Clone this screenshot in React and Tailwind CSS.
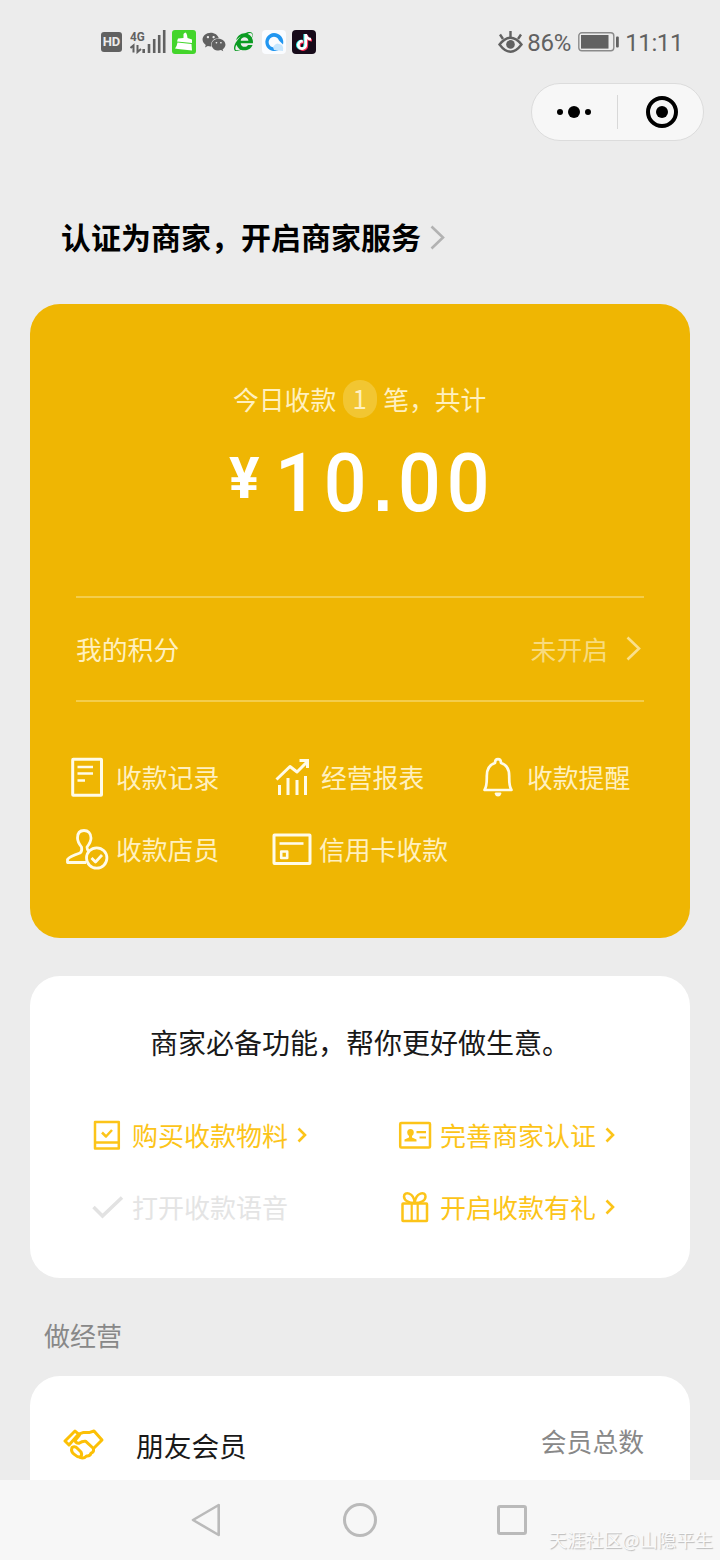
import { FaWeixin, FaTiktok, FaInternetExplorer } from 'react-icons/fa6'

const TOOLS = [
  { label: '收款记录', icon: RecordIcon },
  { label: '经营报表', icon: ReportIcon },
  { label: '收款提醒', icon: BellIcon },
  { label: '收款店员', icon: ClerkIcon },
  { label: '信用卡收款', icon: CardIcon },
]

const FEATURES = [
  { label: '购买收款物料', icon: BookIcon },
  { label: '完善商家认证', icon: IdIcon },
  { label: '打开收款语音', icon: CheckIcon, done: true },
  { label: '开启收款有礼', icon: GiftIcon },
]

/* ---- icons in the yellow card, all on a 45 x 44 box ---- */

function ToolSvg({ children }) {
  return (
    <svg width="45" height="44" viewBox="0 0 45 44" fill="none" stroke="#fffbe8" strokeWidth="3" strokeLinejoin="round" className="shrink-0">
      {children}
    </svg>
  )
}

function RecordIcon() {
  return (
    <ToolSvg>
      <rect x="7.7" y="4.3" width="28.8" height="36" rx="0.5" />
      <path d="M12.5 12H28M12.5 18.5H28M12.5 25.5H20" strokeWidth="2.6" />
    </ToolSvg>
  )
}

function ReportIcon() {
  return (
    <ToolSvg>
      <path d="M6.5 24.5L20 11.5L27 17L37 7" />
      <path d="M29.5 5.5H37.5V13" strokeLinejoin="miter" />
      <path d="M9.5 30V40M18 23V40M27 25V40M35.5 21V40" />
    </ToolSvg>
  )
}

function BellIcon() {
  return (
    <ToolSvg>
      <path d="M8.5 35H35.5C33 31.5 33.2 28 33.2 21C33.2 13.5 30 9.5 25 8C25 5.5 24 4.2 22 4.2C20 4.2 19 5.5 19 8C14 9.5 10.8 13.5 10.8 21C10.8 28 11 31.5 8.5 35Z" strokeWidth="2.7" />
      <path d="M19.5 38.5H24.5Q24 40.5 22 40.5T19.5 38.5Z" strokeWidth="1.8" fill="#fffbe8" />
    </ToolSvg>
  )
}

function ClerkIcon() {
  return (
    <ToolSvg>
      <path d="M21 35.5H2.5V32.5Q4.5 29.5 15 26Q17.5 24.5 16.5 20Q12.5 15 12.5 11C12.5 6 15 3.5 19 3.5S26 6 26 11Q26 15 22 20Q22 23 24 25" strokeWidth="2.8" />
      <circle cx="31.7" cy="31" r="10.2" strokeWidth="2.8" />
      <path d="M26.5 31L30.5 35L37 28" strokeWidth="2.8" />
    </ToolSvg>
  )
}

function CardIcon() {
  return (
    <ToolSvg>
      <rect x="4" y="8" width="36" height="28.5" rx="0.5" />
      <path d="M9.5 16.5H33.5" strokeWidth="2.6" />
      <rect x="11.2" y="24.5" width="6" height="6.5" strokeWidth="2.6" />
    </ToolSvg>
  )
}

/* ---- icons in the feature card, all on a 34 x 34 box ---- */

function FeatureSvg({ children, color = '#fcc419' }) {
  return (
    <svg width="34" height="34" viewBox="0 0 34 34" fill="none" stroke={color} strokeWidth="2.5" strokeLinejoin="round" className="shrink-0">
      {children}
    </svg>
  )
}

function BookIcon() {
  return (
    <FeatureSvg>
      <rect x="5" y="4" width="23.8" height="26.5" />
      <path d="M5 24.5H28.5" />
      <path d="M12 14.5L16 18.5L22 12" />
    </FeatureSvg>
  )
}

function IdIcon() {
  return (
    <FeatureSvg>
      <rect x="2.2" y="5" width="29.8" height="24.5" rx="1" />
      <path d="M6.5 23.5V21.5L11 19.5V18Q9.2 16.5 9.2 14.5Q9.2 11 12.5 11T15.8 14.5Q15.8 16.5 14 18V19.5L18.5 21.5V23.5Z" fill="#fcc419" stroke="none" />
      <path d="M18.5 14.2H28M21.5 19.5H28" strokeWidth="2.2" />
    </FeatureSvg>
  )
}

function CheckIcon() {
  return (
    <FeatureSvg color="#e2e2e2">
      <path d="M3.5 17L12.5 26L32 7.5" strokeWidth="3.5" strokeLinejoin="miter" />
    </FeatureSvg>
  )
}

function GiftIcon() {
  return (
    <FeatureSvg>
      <rect x="4.5" y="13.5" width="24.5" height="17.5" rx="0.5" />
      <path d="M13.7 14V31M19.7 14V31" strokeWidth="2.2" />
      <path d="M16.7 13C11 13 6 10.5 6 6.5C6 1 16 2 16.7 13ZM16.7 13C23 13 27.5 10.5 27.5 6.5C27.5 1 17.7 2 16.7 13Z" />
    </FeatureSvg>
  )
}

function HandshakeIcon() {
  return (
    <svg width="42" height="34" viewBox="0 0 42 34" fill="none" stroke="#fcc006" strokeWidth="3" strokeLinejoin="round" strokeLinecap="round">
      <path d="M2 13L12 3L15.5 6.2L6 17Z" />
      <path d="M15.5 6.2L20 4.6H26L31 3L39 12L30.5 20.5" />
      <path d="M16.5 7L12 12.5Q13 15.5 16 15.2Q19.5 12.8 22.5 13.2L30.5 20.5Q31 24.5 28 25.3Q27 28.5 23.5 28Q20.5 31.3 17 29.3" />
      <path d="M9 19.5Q12 17.5 14.5 20.5L18 24Q19.5 27 17.5 29.3Q14 29 11.5 26.5Q7.5 24 9 19.5Z" />
    </svg>
  )
}

function Chevron({ width, height, color, stroke }) {
  return (
    <svg width={width} height={height} viewBox={`0 0 ${width} ${height}`} fill="none" stroke={color} strokeWidth={stroke} className="shrink-0">
      <path d={`M1.5 1.5L${width - 2} ${height / 2}L1.5 ${height - 1.5}`} />
    </svg>
  )
}

function StatusBar() {
  return (
    <header className="flex h-[83px] items-center pr-[37px] pl-[101px] font-['Roboto',sans-serif] text-[#616161]">
      <div className="flex h-5 w-[21px] items-center justify-center rounded-[3px] bg-[#616161] text-[13px] font-bold text-[#ececec]">HD</div>
      <div className="relative ml-2 h-6 w-[36px]">
        <span className="absolute top-0 left-0 origin-left scale-x-90 text-[13px] leading-none font-bold">4G</span>
        <svg width="36" height="24" viewBox="0 0 36 24" fill="none" stroke="#616161" strokeWidth="2.6">
          <path d="M19 23V14M24.2 23V9M29.2 23V5M34.2 23V0M13.7 23V19" />
          <path d="M0.5 18L3.5 15.5V22.5M7.5 15V22L11 19" strokeWidth="2" />
        </svg>
      </div>
      <svg width="24" height="24" viewBox="0 0 24 24" className="ml-[6px]">
        <rect width="24" height="24" rx="3" fill="#43d52b" />
        <path d="M11.5 4Q14 0.5 15 5L15.5 8L20 9.5V13L5 11.5L6 8.5L11.5 8Z" fill="#fff" />
        <path d="M5.5 12.5L19.5 14L20 20.5L6 19L3 18.5Q5 16 5.5 12.5Z" fill="#fff" />
      </svg>
      <FaWeixin className="ml-[6px] h-[24px] w-[24px]" />
      <FaInternetExplorer className="ml-[8px] h-[19px] w-[19px] text-[#0b9b22]" />
      <svg width="24" height="24" viewBox="0 0 24 24" className="ml-[9px]">
        <rect width="24" height="24" rx="4" fill="#fafcff" />
        <path d="M12 3a9 9 0 1 0 6 16l-3-2.5a5.300 5.300 0 1 1 2-6l4 4A9.300 9.300 0 0 0 12 3Z" fill="#2196f0" />
        <path d="M11 17Q14 12 17 14Q22 14 21 21L12 20Z" fill="#c7e6fd" />
      </svg>
      <div className="relative ml-[6px] h-6 w-6 rounded bg-[#170b1a]">
        <FaTiktok className="absolute top-[4px] left-[3px] h-4 w-4 text-[#25f4ee]" />
        <FaTiktok className="absolute top-[5px] left-[5px] h-4 w-4 text-[#fe2c55]" />
        <FaTiktok className="absolute top-[4px] left-[4px] h-4 w-4 text-white" />
      </div>

      <div className="ml-auto flex items-center">
        <svg width="25" height="22" viewBox="0 0 25 22" fill="none" stroke="#616161" strokeWidth="2.4">
          <path d="M1.5 13.5Q12.5 0 23.5 13.5Q12.5 28 1.5 13.5Z" />
          <circle cx="12.5" cy="13.4" r="4.3" fill="#616161" stroke="none" />
          <path d="M12.5 0V6M2 3.5L5 8M23 3.5L20 8" />
        </svg>
        <span className="ml-[4px] pt-[2px] text-[24px] tracking-[-0.2px]">86%</span>
        <svg width="41" height="20" viewBox="0 0 41 20" className="ml-[7px]">
          <rect x="0.8" y="0.8" width="35" height="18" rx="3" fill="none" stroke="#8a8a8a" strokeWidth="1.4" />
          <rect x="3" y="3" width="27.5" height="13.6" fill="#616161" />
          <rect x="38" y="4.5" width="2.8" height="11" rx="1" fill="#616161" />
        </svg>
        <span className="ml-[6px] pt-[2px] text-[24px] tracking-[-0.4px]">11:11</span>
      </div>
    </header>
  )
}

function Capsule() {
  return (
    <div className="mr-4 ml-auto flex h-[58px] w-[173px] items-center rounded-full border border-[#dcdcdc] bg-[#f7f7f7]">
      <div className="flex h-[34px] w-[86px] items-center justify-center gap-[5px] border-r border-[#d8d8d8] pr-px">
        <i className="h-1.5 w-1.5 rounded-full bg-black" />
        <i className="h-3 w-3 rounded-full bg-black" />
        <i className="h-1.5 w-1.5 rounded-full bg-black" />
      </div>
      <div className="flex flex-1 justify-center pl-[3px]">
        <div className="flex h-8 w-8 items-center justify-center rounded-full border-4 border-black">
          <i className="h-3 w-3 rounded-full bg-black" />
        </div>
      </div>
    </div>
  )
}

function IncomeCard() {
  return (
    <section className="mx-[30px] h-[634px] rounded-[30px] bg-[#efb603] text-[#fff0bf]">
      <div className="flex h-[292px] flex-col pt-[76px]">
        <div className="flex h-[38px] items-center pl-[203px] text-[25.8px]">
          <span>今日收款</span>
          <span className="mx-[6.5px] flex h-[38px] w-[34px] items-center justify-center rounded-full bg-[#f2c632] pb-px">1</span>
          <span>笔，共计</span>
        </div>
        <div className="flex pt-[18px] pl-[199px] font-['Roboto',sans-serif] text-white">
          <span className="w-[46px] pt-[10px] text-[57px] leading-[66px] font-bold">¥</span>
          <span className="inline-block origin-left scale-x-[0.93] text-[81px] leading-[96px] font-medium tracking-[6.4px]">
            10<span className="ml-px font-['Liberation_Sans',sans-serif] text-[72px] leading-none font-bold">.</span>00
          </span>
        </div>
      </div>

      <div className="mx-[46px] flex h-[106px] items-center border-y-2 border-[#f4cd4c] text-[25.8px]">
        <span>我的积分</span>
        <span className="mr-[18px] ml-auto text-[#f8db7e]">未开启</span>
        <span className="mr-[3px] pb-[2px]">
          <Chevron width={15} height={25} color="#fae08c" stroke={2.6} />
        </span>
      </div>

      <div className="mt-[39px] ml-[35px] grid grid-cols-[205px_206px_200px] text-[25.8px]">
        {TOOLS.map(({ label, icon: Icon }, i) => (
          <div key={label} className={`flex h-[72px] items-center whitespace-nowrap ${i === 4 ? 'gap-[4px]' : 'gap-[6px]'}`}>
            <Icon />
            <span>{label}</span>
          </div>
        ))}
      </div>
    </section>
  )
}

function FeatureCard() {
  return (
    <section className="mx-[30px] mt-[38px] h-[302px] rounded-[30px] bg-white pt-[45px]">
      <h2 className="pl-[120px] text-[28px] leading-[42px] text-[#191919]">商家必备功能，帮你更好做生意。</h2>
      <div className="mt-[36px] ml-[60px] grid grid-cols-[308px_250px] text-[26px]">
        {FEATURES.map(({ label, icon: Icon, done }) => (
          <div key={label} className={`flex h-[72px] items-center ${done ? 'text-[#e4e4e4]' : 'text-[#fcc419]'}`}>
            <Icon />
            <span className="mr-[9px] ml-[8px] pb-[2px]">{label}</span>
            {!done && <Chevron width={10} height={16} color="#fcc419" stroke={2.6} />}
          </div>
        ))}
      </div>
    </section>
  )
}

function NavBar() {
  return (
    <nav className="relative flex h-20 shrink-0 items-center gap-[121px] bg-[#f7f7f7] pl-[190px]">
      <svg width="32" height="34" viewBox="0 0 32 34" fill="none" stroke="#bababa" strokeWidth="2.6" strokeLinejoin="round">
        <path d="M28.7 2V32L3 17Z" />
      </svg>
      <div className="h-[34px] w-[34px] rounded-full border-[3px] border-[#bababa]" />
      <div className="-ml-px h-[30px] w-[30px] rounded-[3px] border-[3px] border-[#bababa]" />
      <span className="absolute right-[7px] bottom-[7px] text-[18.4px] leading-7 text-[#fafafa] [text-shadow:1px_1px_1px_#bbb]">天涯社区@山隐平生</span>
    </nav>
  )
}

export default function App() {
  return (
    <div className="flex h-[1560px] w-[720px] flex-col overflow-hidden bg-[#ececec] font-['Noto_Sans_CJK_SC',sans-serif]">
      <main className="h-[1480px] overflow-hidden">
        <StatusBar />
        <Capsule />
        <h1 className="mt-[67px] mb-[37px] flex h-[59px] items-center gap-[9px] pl-[61px] text-[30px] font-bold text-black">
          <span className="pb-[3px]">认证为商家，开启商家服务</span>
          <Chevron width={15} height={25} color="#b2b2b2" stroke={2.6} />
        </h1>
        <IncomeCard />
        <FeatureCard />
        <h3 className="flex h-[98px] items-center pt-[15px] pl-[44px] text-[26px] text-[#888]">做经营</h3>
        <section className="mx-[30px] flex h-[140px] rounded-t-[30px] bg-white pr-[46px] pl-[33px]">
          <div className="pt-[52px]">
            <HandshakeIcon />
          </div>
          <span className="ml-[31px] pt-[48px] text-[27.7px] leading-[42px] text-[#191919]">朋友会员</span>
          <span className="ml-auto pt-[44px] text-[25.8px] leading-[42px] text-[#888]">会员总数</span>
        </section>
      </main>
      <NavBar />
    </div>
  )
}
